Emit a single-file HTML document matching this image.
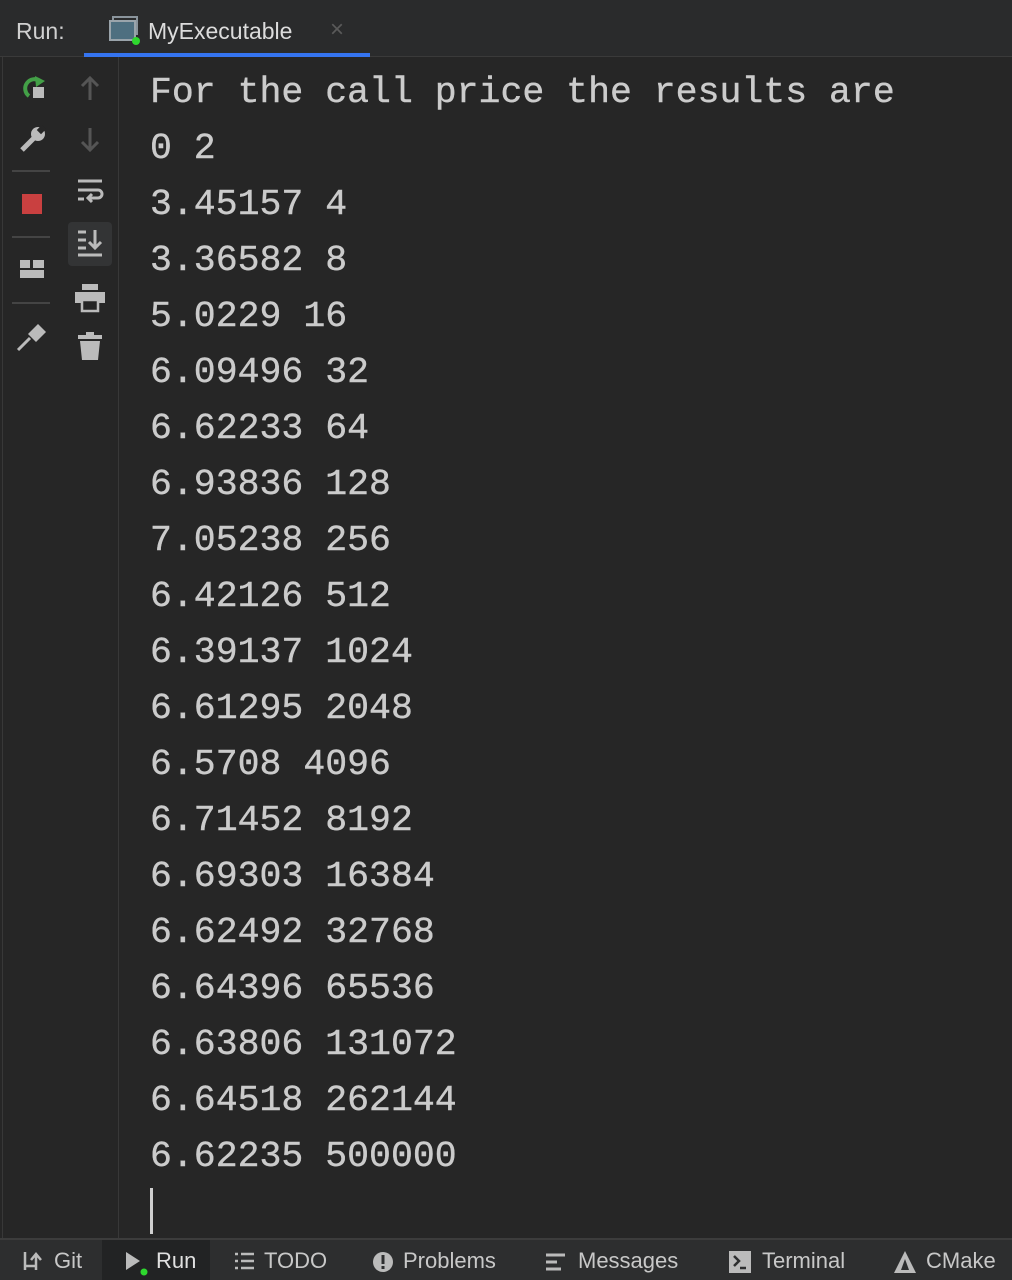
<!DOCTYPE html>
<html><head><style>
body{margin:0;width:1012px;height:1280px;background:#262626;overflow:hidden;position:relative;font-family:"Liberation Sans",sans-serif}
.hdr{position:absolute;left:0;top:0;width:1012px;height:57px;background:#2a2b2c;border-bottom:1px solid #3a3a3a;box-sizing:border-box}
.run{position:absolute;left:16px;top:18px;font-size:23px;color:#d0d0d0}
.tab{position:absolute;left:148px;top:18px;font-size:23px;color:#dcdcdc}
.x{position:absolute;left:330px;top:16px;font-size:24px;color:#5a5a5a}
.ul{position:absolute;left:84px;top:53px;width:286px;height:4px;background:#3574f0}
.col1{position:absolute;left:2px;top:57px;width:58px;height:1181px;border-left:1px solid #383838;border-right:1px solid #383838;background:#262626}
.col2{position:absolute;left:61px;top:57px;width:57px;height:1181px;border-right:1px solid #383838;background:#262626}
.con{position:absolute;left:150px;top:65px;font-family:"Liberation Mono",monospace;font-size:36.5px;line-height:56px;color:#cbcbcb;white-space:pre;-webkit-text-stroke:0.4px #cbcbcb}
.cur{position:absolute;left:150px;top:1188px;width:3px;height:46px;background:#cfcfcf}
.bot{position:absolute;left:0;top:1238px;width:1012px;height:42px;background:#2d2e2f;border-top:2px solid #3c3c3c;box-sizing:border-box}
.bi{position:absolute;top:8px;font-size:22px;color:#c8c8c8}
.sel{position:absolute;left:102px;top:0;width:108px;height:40px;background:#222324}
.sep{position:absolute;left:12px;width:38px;height:2px;background:#444}
</style></head><body>
<div class="hdr">
<div class="run">Run:</div>
<svg style="position:absolute;left:109px;top:16px" width="32" height="30"><rect x="4" y="1" width="24" height="17" fill="none" stroke="#8a949c" stroke-width="2"/><rect x="1" y="5" width="25" height="19" fill="#4e6f80" stroke="#9aa4ab" stroke-width="2"/><circle cx="27" cy="25" r="4" fill="#2ed82e"/></svg>
<div class="tab">MyExecutable</div><div class="x">×</div>
<div class="ul"></div>
</div>
<div class="col1"></div><div class="col2"></div>
<svg style="position:absolute;left:18px;top:72px" width="30" height="30"><path d="M22 9 A9 9 0 1 0 11 24" fill="none" stroke="#43a047" stroke-width="4"/><path d="M17 4 L27 9 L18 15 Z" fill="#43a047"/><rect x="15" y="15" width="11" height="11" fill="#bbb"/></svg>
<svg style="position:absolute;left:18px;top:124px" width="30" height="30"><path d="M4 26 L16 14" stroke="#bbb" stroke-width="5"/><circle cx="20" cy="10" r="7" fill="#bbb"/><rect x="20" y="2" width="6" height="7" fill="#262626" transform="rotate(45 23 6)"/></svg>
<div class="sep" style="top:170px"></div>
<div style="position:absolute;left:22px;top:194px;width:20px;height:20px;background:#c94040"></div>
<div class="sep" style="top:236px"></div>
<svg style="position:absolute;left:20px;top:260px" width="26" height="20"><rect x="0" y="0" width="10" height="8" fill="#bbb"/><rect x="13" y="0" width="11" height="8" fill="#bbb"/><rect x="0" y="10" width="24" height="8" fill="#bbb"/></svg>
<div class="sep" style="top:302px"></div>
<svg style="position:absolute;left:16px;top:320px" width="32" height="32"><path d="M2 30 L14 18" stroke="#bbb" stroke-width="3"/><path d="M12 14 L22 4 L30 12 L20 22 Z" fill="#bbb"/></svg>
<svg style="position:absolute;left:78px;top:74px" width="24" height="28"><path d="M12 26 V4 M4 12 L12 4 L20 12" fill="none" stroke="#555" stroke-width="3"/></svg>
<svg style="position:absolute;left:78px;top:126px" width="24" height="28"><path d="M12 2 V24 M4 16 L12 24 L20 16" fill="none" stroke="#555" stroke-width="3"/></svg>
<svg style="position:absolute;left:76px;top:178px" width="28" height="30"><path d="M2 3 H26 M2 12 H22 A4 4 0 0 1 22 20 H12 M16 16 L12 20 L16 24 M2 21 H8" fill="none" stroke="#bbb" stroke-width="3"/></svg>
<div style="position:absolute;left:68px;top:222px;width:44px;height:44px;background:#333435;border-radius:4px"></div>
<svg style="position:absolute;left:76px;top:228px" width="28" height="30"><path d="M2 4 H10 M2 12 H10 M2 20 H10 M2 27 H26 M19 2 V20 M13 14 L19 20 L25 14" fill="none" stroke="#bbb" stroke-width="3"/></svg>
<svg style="position:absolute;left:74px;top:283px" width="32" height="30"><rect x="8" y="1" width="16" height="6" fill="#bbb"/><rect x="1" y="9" width="30" height="11" fill="#bbb"/><rect x="8" y="17" width="16" height="11" fill="#262626" stroke="#bbb" stroke-width="2.5"/></svg>
<svg style="position:absolute;left:78px;top:332px" width="24" height="30"><rect x="0" y="3" width="24" height="4" fill="#bbb"/><rect x="8" y="0" width="8" height="4" fill="#bbb"/><path d="M2 9 H22 L20 28 H4 Z" fill="#bbb"/></svg>
<div class="con">For the call price the results are
0 2
3.45157 4
3.36582 8
5.0229 16
6.09496 32
6.62233 64
6.93836 128
7.05238 256
6.42126 512
6.39137 1024
6.61295 2048
6.5708 4096
6.71452 8192
6.69303 16384
6.62492 32768
6.64396 65536
6.63806 131072
6.64518 262144
6.62235 500000</div>
<div class="cur"></div>
<div class="bot">
<div class="sel"></div>
<svg style="position:absolute;left:22px;top:10px" width="22" height="22"><path d="M3 2 V20 M3 16 H14 M14 20 V6 M9 10 L14 4 L19 10" fill="none" stroke="#bbb" stroke-width="2.5"/></svg>
<div class="bi" style="left:54px">Git</div>
<svg style="position:absolute;left:124px;top:10px" width="26" height="26"><path d="M2 2 L16 11 L2 20 Z" fill="#bbb"/><circle cx="20" cy="22" r="3.5" fill="#2ed82e"/></svg>
<div class="bi" style="left:156px;color:#e0e0e0">Run</div>
<svg style="position:absolute;left:234px;top:12px" width="22" height="18"><path d="M1 2 H4 M7 2 H20 M1 9 H4 M7 9 H20 M1 16 H4 M7 16 H20" stroke="#bbb" stroke-width="2.5"/></svg>
<div class="bi" style="left:264px">TODO</div>
<svg style="position:absolute;left:372px;top:11px" width="22" height="22"><circle cx="11" cy="11" r="10" fill="#bbb"/><rect x="9.5" y="4" width="3" height="9" fill="#2d2e2f"/><rect x="9.5" y="15" width="3" height="3" fill="#2d2e2f"/></svg>
<div class="bi" style="left:403px">Problems</div>
<svg style="position:absolute;left:545px;top:13px" width="24" height="18"><path d="M1 2 H20 M1 9 H12 M1 16 H16" stroke="#bbb" stroke-width="3"/></svg>
<div class="bi" style="left:578px">Messages</div>
<svg style="position:absolute;left:729px;top:11px" width="22" height="22"><rect x="0" y="0" width="22" height="22" fill="#bbb"/><path d="M5 5 L10 10 L5 15 M11 17 H17" fill="none" stroke="#2d2e2f" stroke-width="2.5"/></svg>
<div class="bi" style="left:762px">Terminal</div>
<svg style="position:absolute;left:893px;top:10px" width="24" height="24"><path d="M12 1 L23 23 H1 Z" fill="#bbb"/><path d="M12 9 L16 20 H8 Z" fill="#2d2e2f"/></svg>
<div class="bi" style="left:926px">CMake</div>
</div>
</body></html>
